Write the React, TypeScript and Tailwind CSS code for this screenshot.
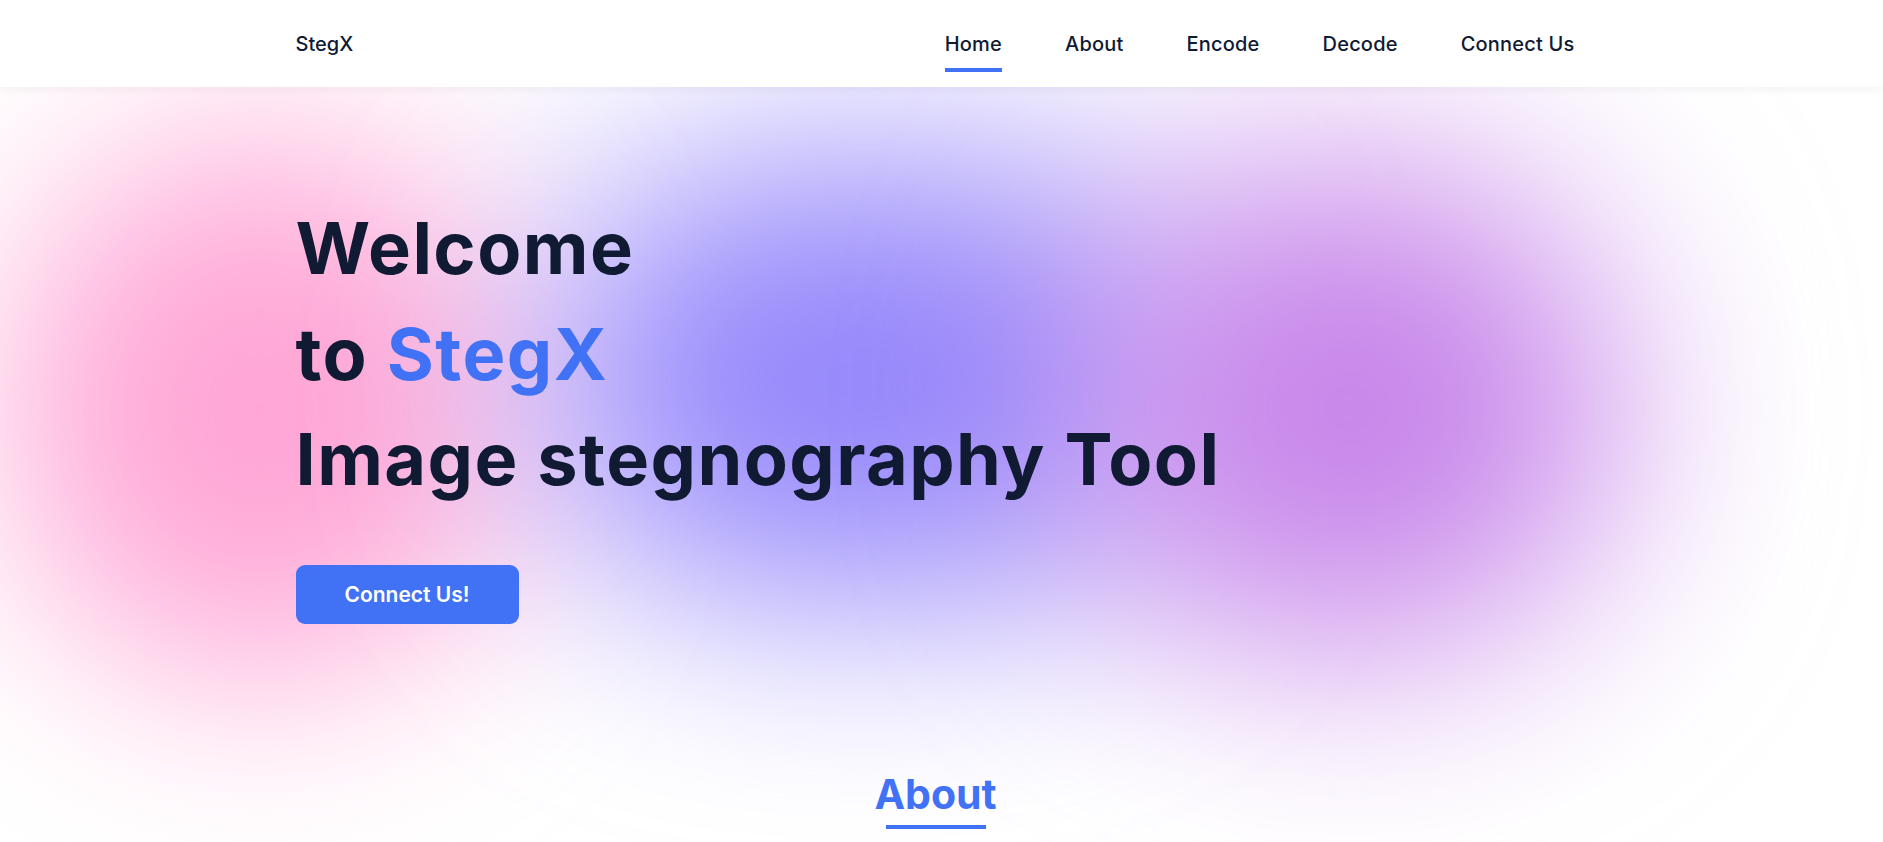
import React from 'react';

const links = ['Home', 'About', 'Encode', 'Decode', 'Connect Us'];

const App: React.FC = () => {
  return (
    <div className="relative min-h-screen overflow-hidden bg-white font-['Inter','Noto_Sans',sans-serif] text-[#101a33]">
      {/* Background blobs */}
      <div className="absolute left-[10px] top-[140px] w-[500px] h-[540px] rounded-full bg-[#ffa6d6] blur-[100px] pointer-events-none" />
      <div className="absolute left-[545px] top-[160px] w-[640px] h-[440px] rounded-full bg-[#9587fb] blur-[110px] pointer-events-none" />
      <div className="absolute left-[1080px] top-[163px] w-[540px] h-[490px] rounded-full bg-[#c785ea] blur-[110px] pointer-events-none" />

      {/* Navbar */}
      <nav className="relative z-10 h-[87px] bg-white shadow-[0_2px_10px_rgba(0,0,0,0.05)]">
        <div className="mx-auto flex h-full w-[1296px] items-center justify-between pl-[2px]">
          <a className="text-[20px] font-medium leading-[30px]">StegX</a>
          <ul className="flex gap-[63px] pr-[15px]">
            {links.map((l, i) => (
              <li key={l} className="relative text-[20px] font-medium leading-[30px] tracking-[0.01em]">
                {l}
                {i === 0 && <span className="absolute left-0 right-0 top-[39px] h-[4px] bg-[#4172f5]" />}
              </li>
            ))}
          </ul>
        </div>
      </nav>

      {/* Hero */}
      <section className="relative z-10 mx-auto w-[1296px] pl-[2px] pt-[108px]">
        <h1 className="text-[72px] font-bold leading-[105.6px] tracking-[0.02em]">
          Welcome
          <br />
          to <span className="text-[#4172f5]">StegX</span>
          <br />
          Image stegnography Tool
        </h1>
        <button className="mt-[53px] h-[59px] w-[223px] rounded-[9px] bg-[#4172f5] text-[21px] font-semibold text-white">
          Connect Us!
        </button>
      </section>

      {/* About */}
      <section className="relative z-10 flex flex-col items-center pt-[146px] pr-[12px]">
        <h2 className="text-[41px] font-bold leading-[1.2] text-[#4172f5]">About</h2>
        <span className="mt-[6px] h-[4px] w-[100px] bg-[#4172f5]" />
      </section>
    </div>
  );
};

export default App;
